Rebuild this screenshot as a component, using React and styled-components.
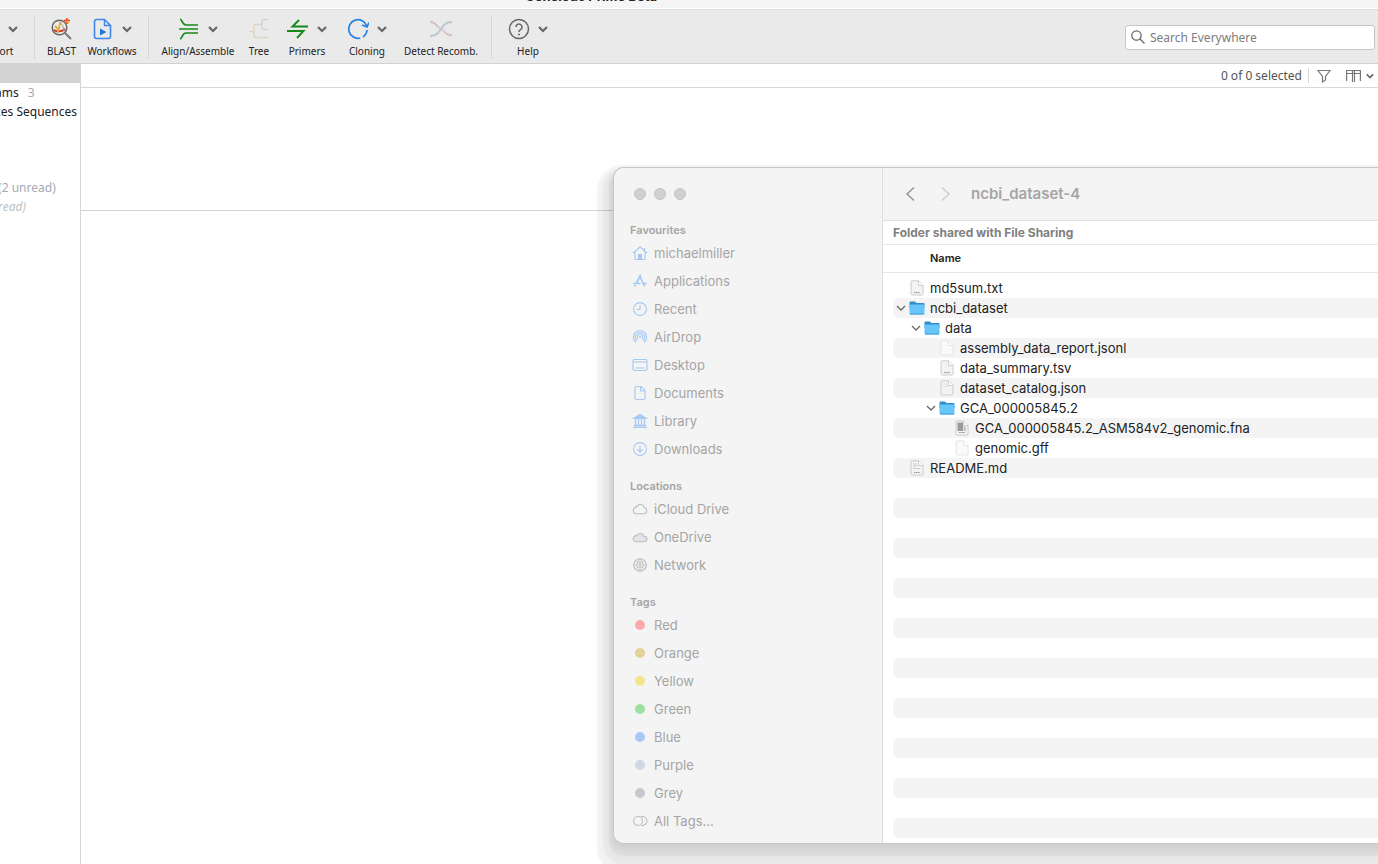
import React from 'react'
import styled, { createGlobalStyle } from 'styled-components'

const GlobalStyle = createGlobalStyle`
  * {
    box-sizing: border-box;
  }

  body {
    margin: 0;
    background: #fff;
    font-family: 'Noto Sans', sans-serif;
    font-size: 12px;
  }

  button {
    border: 0;
    padding: 0;
    background: none;
    font: inherit;
    color: inherit;
  }

  svg {
    display: block;
    flex-shrink: 0;
  }
`

const Page = styled.div`
  position: relative;
  display: flex;
  flex-direction: column;
  height: 100vh;
  overflow: hidden;
`

const TitleBar = styled.header`
  display: flex;
  align-items: flex-end;
  height: 8px;
  padding-right: 196px;
  background: #f5f5f5;

  h1 {
    flex: 1;
    margin: 0 0 4px;
    font: 700 13px/16px Inter, sans-serif;
    color: #222;
    text-align: center;
  }
`

const Toolbar = styled.div`
  display: flex;
  align-items: center;
  height: 56px;
  padding: 2px 3px 0 0;
  border-top: 1px solid #fff;
  border-bottom: 1px solid #d3d3d3;
  background: #eaeaea;
  box-shadow: inset 0 1px 0 #dedede;
`

const Tools = styled.div`
  display: flex;
  align-items: center;
  flex: 1;
  margin-left: -32px;
`

const Tool = styled.button`
  flex-shrink: 0;
  width: ${(props) => props.$width}px;
  font-size: 10px;
  line-height: 14px;
  color: #222;
  white-space: nowrap;

  .art {
    display: flex;
    align-items: center;
    justify-content: center;
    gap: 8px;
    height: 24px;
    margin-bottom: 3px;
  }
`

const Separator = styled.span`
  width: 1px;
  height: ${(props) => props.$height}px;
  margin: 0 6px;
  background: #d6d6d6;
`

const SearchBox = styled.label`
  display: flex;
  align-items: center;
  gap: 5px;
  width: 250px;
  height: 25px;
  padding: 0 5px;
  border: 1px solid #c6c6c6;
  border-radius: 3px;
  background: #fff;

  input {
    flex: 1;
    min-width: 0;
    padding: 0;
    border: 0;
    outline: 0;
    font: inherit;
  }

  input::placeholder {
    color: #7d7d7d;
    opacity: 1;
  }
`

const Workspace = styled.div`
  display: flex;
  flex: 1;
`

const Sources = styled.aside`
  width: 81px;
  border-right: 1px solid #d6d6d6;
  overflow: hidden;
`

const SourceRow = styled.div`
  height: 19px;
  padding-right: 3px;
  margin-left: -5px;
  line-height: 19px;
  white-space: pre;
  color: ${(props) => props.$color || '#222'};
  font-style: ${(props) => (props.$italic ? 'italic' : 'normal')};
  background: ${(props) => (props.$selected ? '#d3d3d3' : 'none')};

  span {
    margin-left: 9px;
    color: #a9a9a9;
  }
`

const Documents = styled.main`
  flex: 1;
`

const StatusBar = styled.div`
  display: flex;
  align-items: center;
  justify-content: flex-end;
  height: 24px;
  padding-right: 4px;
  border-bottom: 1px solid #d9d9d9;
  color: #555;

  button + button {
    display: flex;
    align-items: center;
    gap: 5px;
    margin-left: 13px;
  }
`

const DocumentList = styled.div`
  height: 123px;
  border-bottom: 1px solid #d3d3d3;
`

const Finder = styled.section`
  position: absolute;
  top: 168px;
  left: 614px;
  right: -40px;
  display: flex;
  border-radius: 10px;
  background: #fff;
  overflow: hidden;
  font-family: Inter, sans-serif;
  font-size: 13px;
  box-shadow: 0 0 0 1px #c6c6c6, 0 4px 6px 2px rgba(0, 0, 0, 0.06),
    0 8px 2px 5px rgba(0, 0, 0, 0.05), 0 11px 2px 11px rgba(0, 0, 0, 0.04),
    0 14px 2px 17px rgba(0, 0, 0, 0.05);
`

const Places = styled.nav`
  width: 269px;
  padding: 20px 16px 8px;
  border-right: 1px solid #dedede;
  background: #f4f4f4;
  color: #a5a5a5;

  h2 {
    margin: 14px 0 0;
    font-size: 11px;
    font-weight: 600;
    line-height: 18px;
  }
`

const Lights = styled.div`
  display: flex;
  gap: 8px;
  margin: 0 4px 21px;

  button {
    width: 12px;
    height: 12px;
    border: 1px solid #c3c3c3;
    border-radius: 50%;
    background: #d0d0d0;
  }
`

const Place = styled.a`
  display: flex;
  align-items: center;
  gap: 6px;
  height: 28px;
  padding-left: 2px;
  color: inherit;
  text-decoration: none;

  svg {
    color: ${(props) => (props.$grey ? '#bdbdbd' : '#a5c8f4')};
  }
`

const Dot = styled.span`
  width: 10px;
  height: 10px;
  margin: 0 3px;
  border-radius: 50%;
  background: ${(props) => props.$color};
`

const Browser = styled.div`
  flex: 1;
  min-width: 0;
`

const BrowserBar = styled.div`
  display: flex;
  align-items: center;
  gap: 17px;
  height: 53px;
  padding: 0 0 1px 18px;
  border-bottom: 1px solid #dedede;
  background: #f4f4f4;
  color: #a5a5a5;

  h2 {
    margin: 0;
    font-size: 15px;
    font-weight: 600;
  }
`

const Notice = styled.p`
  height: 24px;
  margin: 0;
  padding-left: 10px;
  border-bottom: 1px solid #e6e6e6;
  font-size: 12px;
  font-weight: 700;
  line-height: 23px;
  color: #808080;
`

const FileTable = styled.table`
  display: block;

  thead,
  tbody,
  tr,
  td,
  th {
    display: block;
    padding: 0;
  }

  th {
    height: 28px;
    padding-left: 47px;
    border-bottom: 1px solid #e6e6e6;
    font-size: 11px;
    font-weight: 600;
    line-height: 26px;
    text-align: left;
    color: #222;
  }

  tbody {
    padding: 5px 0 5px 10px;
  }
`

const FileRow = styled.tr`
  height: 20px;
  border-radius: 5px;
  color: #222;

  &:nth-child(even) {
    background: #f4f4f4;
  }

  td {
    display: flex;
    align-items: center;
    height: 20px;
    padding-left: ${(props) => props.$depth * 15 + 3}px;
  }

  svg + svg,
  .blank + svg {
    margin: 0 5px 0 3px;
  }

  .blank {
    width: 10px;
  }
`

function Chevron({ size = 10, width = 2, color = '#666' }) {
  return (
    <svg width={size} height={size} viewBox="0 0 10 10" fill="none" stroke={color} strokeWidth={width}>
      <path d="M1 3l4 4 4-4" />
    </svg>
  )
}

const toolIcons = {
  blast: (
    <>
      <circle cx="8.500" cy="9.500" r="7.300" stroke="#666" strokeWidth="1.500" />
      <path d="M14 15l6 6" stroke="#777" strokeWidth="1.800" />
      <path d="M3 12c3 2 8 2 11-1" stroke="#d42a1e" strokeWidth="1.800" />
      <path d="M6 15c3-2 1-7 4-11M4 8l4 4" stroke="#e9ad35" strokeWidth="1.800" />
      <path d="M8 4c3 2 5 5 5 9" stroke="#a79b90" strokeWidth="1" />
      <path d="M16 0v6M13 2.500h6" stroke="#e83c20" strokeWidth="1.500" />
      <path d="M16 3l2 2" stroke="#f1b52c" strokeWidth="1.800" />
    </>
  ),
  workflow: (
    <>
      <path d="M4.500 1.500h8l6 6v11a2 2 0 0 1-2 2h-12a2 2 0 0 1-2-2v-15a2 2 0 0 1 2-2z" stroke="#3d87e8" strokeWidth="1.600" />
      <path d="M12.500 1.500v6h6" stroke="#3d87e8" strokeWidth="1.400" />
      <path d="M8 10.500l6.500 3.500L8 17.500z" fill="#1f78d8" />
    </>
  ),
  align: (
    <g stroke="#168a16" strokeWidth="1.700">
      <path d="M2 1c2 0 2 6 6 6h12M1 11h19M2 21c2 0 2-6 6-6h12" />
    </g>
  ),
  tree: (
    <g strokeWidth="1.600">
      <path d="M20 1.500h-4a2 2 0 0 0-2 2v6a2 2 0 0 0 2 2h4M14 6.500h-6" stroke="#d6d4d0" />
      <path d="M8 6.500a2 2 0 0 0-2 2v9a2 2 0 0 0 2 2h12M1 13.500h5" stroke="#dfd5c2" />
    </g>
  ),
  primers: (
    <path d="M21 8.500H5.500L12 2M0 13h16.500L10 20" stroke="#168a16" strokeWidth="1.900" />
  ),
  cloning: (
    <>
      <path d="M19.800 8a9.300 9.300 0 1 0-6.500 12M16 19a9.300 9.300 0 0 0 4-7" stroke="#2380e5" strokeWidth="1.700" />
      <path d="M15 7l5 2 2-4.500" stroke="#2380e5" strokeWidth="1.700" />
    </>
  ),
  recomb: (
    <g strokeWidth="1.900">
      <path d="M0 4c4 0 6 2 8 5M14 13c3 4 5 4 8 4" stroke="#d8c0bf" />
      <path d="M7 8l8 6" stroke="#d1ced6" />
      <path d="M0 18c13 0 9-14 22-14" stroke="#bdc4d1" />
    </g>
  ),
  help: (
    <>
      <circle cx="11" cy="11" r="9.500" stroke="#666" strokeWidth="1.500" />
      <path d="M8 9a3 3 0 1 1 4.800 2.400C11.500 12.300 11 12.500 11 14" stroke="#666" strokeWidth="1.500" />
      <circle cx="11" cy="16.500" r="1" fill="#666" />
    </>
  ),
}

const tools = [
  { label: 'Export', width: 60, menu: true },
  { separator: true },
  { label: 'BLAST', width: 41, icon: 'blast' },
  { label: 'Workflows', width: 60, icon: 'workflow', menu: true },
  { separator: true },
  { label: 'Align/Assemble', width: 86, icon: 'align', menu: true },
  { label: 'Tree', width: 36, icon: 'tree' },
  { label: 'Primers', width: 60, icon: 'primers', menu: true },
  { label: 'Cloning', width: 60, icon: 'cloning', menu: true },
  { label: 'Detect Recomb.', width: 88, icon: 'recomb' },
  { separator: true },
  { label: 'Help', width: 60, icon: 'help', menu: true },
]

const placeIcons = {
  home: (
    <>
      <path d="M1 8l7-6 7 6M3 7v7.500h10V7M12.500 5.500V3" />
      <path d="M6.500 9.500h3v5h-3z" fill="currentColor" />
    </>
  ),
  apps: <path d="M8.800 2L4.200 10.500M7.200 2l5.600 11.500M1.200 10.500h7.300M11.500 10.500h3.300M3.500 12l-.8 1.500" strokeWidth="1.700" />,
  clock: (
    <>
      <circle cx="8" cy="8" r="6.400" />
      <path d="M8 4v4.500H4.500" />
    </>
  ),
  airdrop: (
    <>
      <path d="M4 13.500a6.700 6.700 0 1 1 8 0M5 11.700a4.700 4.700 0 1 1 6 0M6.200 10a2.700 2.700 0 1 1 3.600 0" />
      <circle cx="8" cy="8" r="1" fill="currentColor" stroke="none" />
    </>
  ),
  desktop: (
    <>
      <rect x="1" y="2.500" width="14" height="11" rx="1.500" />
      <path d="M1 5h14M3.500 11h9" />
    </>
  ),
  document: <path d="M3 3a1.500 1.500 0 0 1 1.500-1.500H9l4 4V13a1.500 1.500 0 0 1-1.500 1.500h-7A1.500 1.500 0 0 1 3 13zM8.500 1.500V6H13" />,
  library: (
    <>
      <path d="M1.500 5.500L8 1.500l6.500 4z" fill="currentColor" />
      <path d="M3.500 6v7M6.500 6v7M9.500 6v7M12.500 6v7M2 12.500h12M1 14.300h14" strokeWidth="1.300" />
    </>
  ),
  download: (
    <>
      <circle cx="8" cy="8" r="6.400" />
      <path d="M8 4.500v6.500M5.500 8.500L8 11l2.500-2.500" />
    </>
  ),
  cloud: <path d="M4 12.800a3.200 3.200 0 0 1-.5-6.200 1.800 1.800 0 0 1 2-1.500 3.700 3.700 0 0 1 6.800 1.500 3.200 3.200 0 0 1 .2 6.200z" />,
  onedrive: <path d="M3.500 12.800a3 3 0 0 1-.3-5.800 2 2 0 0 1 2.300-1 3.700 3.700 0 0 1 6.500 1.300 2.800 2.800 0 0 1 .8 5.500z" fill="#e4e4e4" />,
  network: (
    <>
      <circle cx="8" cy="8" r="6.300" />
      <path d="M8 2v12M2 8h12M3.500 4.500c2.500 2 6.500 2 9 0M3.500 11.500c2.500-2 6.500-2 9 0M8 2c-4 3.500-4 8.500 0 12M8 2c4 3.500 4 8.500 0 12" strokeWidth=".8" />
    </>
  ),
  tags: (
    <>
      <rect x="1.500" y="3.500" width="9" height="9" rx="4.500" />
      <path d="M10.500 3.500a4.500 4.500 0 0 1 0 9M9 3.500h1.500M9 12.500h1.500" />
    </>
  ),
}

const places = [
  {
    title: 'Favourites',
    items: [
      { label: 'michaelmiller', icon: 'home' },
      { label: 'Applications', icon: 'apps' },
      { label: 'Recent', icon: 'clock' },
      { label: 'AirDrop', icon: 'airdrop' },
      { label: 'Desktop', icon: 'desktop' },
      { label: 'Documents', icon: 'document' },
      { label: 'Library', icon: 'library' },
      { label: 'Downloads', icon: 'download' },
    ],
  },
  {
    title: 'Locations',
    grey: true,
    items: [
      { label: 'iCloud Drive', icon: 'cloud' },
      { label: 'OneDrive', icon: 'onedrive' },
      { label: 'Network', icon: 'network' },
    ],
  },
  {
    title: 'Tags',
    grey: true,
    items: [
      { label: 'Red', color: '#fba9af' },
      { label: 'Orange', color: '#e5d09a' },
      { label: 'Yellow', color: '#f1e68e' },
      { label: 'Green', color: '#9ee0a2' },
      { label: 'Blue', color: '#a8c8f5' },
      { label: 'Purple', color: '#d0d7e6' },
      { label: 'Grey', color: '#c8c8c8' },
      { label: 'All Tags...', icon: 'tags' },
    ],
  },
]

const files = [
  { name: 'md5sum.txt', depth: 0, mark: 'text' },
  { name: 'ncbi_dataset', depth: 0, folder: true },
  { name: 'data', depth: 1, folder: true },
  { name: 'assembly_data_report.jsonl', depth: 2, mark: 'plain' },
  { name: 'data_summary.tsv', depth: 2, mark: 'text' },
  { name: 'dataset_catalog.json', depth: 2, mark: 'json' },
  { name: 'GCA_000005845.2', depth: 2, folder: true },
  { name: 'GCA_000005845.2_ASM584v2_genomic.fna', depth: 3, mark: 'dark' },
  { name: 'genomic.gff', depth: 3, mark: 'plain' },
  { name: 'README.md', depth: 0, mark: 'markdown' },
]

const blankRows = Array.from({ length: 18 })

function FolderIcon() {
  return (
    <svg width="16" height="16" viewBox="0 0 16 16">
      <path d="M.5 2.500a1 1 0 0 1 1-1H6L7.500 3h7a1 1 0 0 1 1 1v4H.5z" fill="#2f8fcd" />
      <rect x=".5" y="4.500" width="15" height="10" rx="1" fill="#68c5fa" />
      <path d="M1 14h14" stroke="#409fd8" />
    </svg>
  )
}

function FileIcon({ mark }) {
  let edge = mark === 'plain' ? '#e0e0e0' : '#c2c2c2'

  return (
    <svg width="16" height="16" viewBox="0 0 16 16" fill="none">
      <path
        d="M3 .8h6.500l4.500 4.700V14a1 1 0 0 1-1 1H3a1 1 0 0 1-1-1V1.800a1 1 0 0 1 1-1z"
        fill={mark === 'plain' ? '#fafafa' : '#f3f3f3'}
        stroke={edge}
        strokeWidth=".8"
      />
      <path d="M9.500 1v4.500H14" fill="#fff" stroke={edge} strokeWidth=".8" />
      {mark === 'dark' && <path d="M3.500 2.500H9v8.500H3.500z" fill="#9a9a9a" />}
      {mark === 'dark' && <path d="M9.500 6.500H12V11H9.500z" fill="#c4c4c4" />}
      {mark === 'markdown' && <path d="M4 4h4M4 6h4M4 8.500h7" stroke="#ccc" />}
      {mark === 'json' && <path d="M4 4h4M4 6.500h5" stroke="#e0e0e0" />}
      {(mark === 'text' || mark === 'markdown' || mark === 'dark') && (
        <path d="M5 12.500h6" stroke="#999" strokeWidth="1.200" strokeDasharray="1.600 .4" />
      )}
    </svg>
  )
}

function MainToolbar() {
  return (
    <Toolbar>
      <Tools>
        {tools.map((tool, idx) => {
          if (tool.separator) {
            return <Separator key={idx} $height={44} />
          }
          return (
            <Tool key={tool.label} $width={tool.width}>
              <span className="art">
                <svg width="22" height="22" viewBox="0 0 22 22" fill="none">
                  {toolIcons[tool.icon]}
                </svg>
                {tool.menu && <Chevron width={2.2} />}
              </span>
              {tool.label}
            </Tool>
          )
        })}
      </Tools>
      <SearchBox>
        <svg width="14" height="14" viewBox="0 0 14 14" fill="none" stroke="#666" strokeWidth="1.200">
          <circle cx="5.500" cy="5.500" r="4.700" />
          <path d="M9 9l4.500 4.500" />
        </svg>
        <input type="search" placeholder="Search Everywhere" aria-label="Search Everywhere" />
      </SearchBox>
    </Toolbar>
  )
}

function FinderWindow() {
  return (
    <Finder>
      <Places>
        <Lights>
          <button aria-label="Close" />
          <button aria-label="Minimise" />
          <button aria-label="Zoom" />
        </Lights>
        {places.map((group) => (
          <React.Fragment key={group.title}>
            <h2>{group.title}</h2>
            {group.items.map((item) => (
              <Place key={item.label} href="#" $grey={group.grey}>
                {item.color ? (
                  <Dot $color={item.color} />
                ) : (
                  <svg width="16" height="16" viewBox="0 0 16 16" fill="none" stroke="currentColor" strokeWidth="1.100">
                    {placeIcons[item.icon]}
                  </svg>
                )}
                {item.label}
              </Place>
            ))}
          </React.Fragment>
        ))}
      </Places>
      <Browser>
        <BrowserBar>
          <button aria-label="Back">
            <svg width="18" height="18" viewBox="0 0 18 18" fill="none" stroke="#999" strokeWidth="1.600">
              <path d="M13 2.500L6 9l7 6.500" />
            </svg>
          </button>
          <button aria-label="Forward">
            <svg width="18" height="18" viewBox="0 0 18 18" fill="none" stroke="#cfcfcf" strokeWidth="1.600">
              <path d="M6 2.500L13 9l-7 6.500" />
            </svg>
          </button>
          <h2>ncbi_dataset-4</h2>
        </BrowserBar>
        <Notice>Folder shared with File Sharing</Notice>
        <FileTable>
          <thead>
            <tr>
              <th>Name</th>
            </tr>
          </thead>
          <tbody>
            {files.map((file) => (
              <FileRow key={file.name} $depth={file.depth}>
                <td>
                  {file.folder ? <Chevron width={1.3} /> : <span className="blank" />}
                  {file.folder ? <FolderIcon /> : <FileIcon mark={file.mark} />}
                  {file.name}
                </td>
              </FileRow>
            ))}
            {blankRows.map((_, idx) => (
              <FileRow key={idx} $depth={0}>
                <td />
              </FileRow>
            ))}
          </tbody>
        </FileTable>
      </Browser>
    </Finder>
  )
}

function App() {
  return (
    <Page>
      <GlobalStyle />
      <TitleBar>
        <h1>Geneious Prime Beta</h1>
      </TitleBar>
      <MainToolbar />
      <Workspace>
        <Sources>
          <SourceRow $selected />
          <SourceRow>
            ams<span>3</span>
          </SourceRow>
          <SourceRow>ces Sequences</SourceRow>
          <SourceRow />
          <SourceRow />
          <SourceRow />
          <SourceRow $color="#a4a9b5">{' (2 unread)'}</SourceRow>
          <SourceRow $color="#bfbfbf" $italic>
            {' read)'}
          </SourceRow>
        </Sources>
        <Documents>
          <StatusBar>
            0 of 0 selected
            <Separator $height={15} />
            <button aria-label="Filter">
              <svg width="18" height="14" viewBox="0 0 18 14" fill="none" stroke="#777" strokeWidth="1.200">
                <path d="M3 1.500h12l-4.500 6V11l-3 2V7.500z" />
              </svg>
            </button>
            <button aria-label="Columns">
              <svg width="15" height="14" viewBox="0 0 15 14" fill="none" stroke="#777" strokeWidth="1.200">
                <path d="M.6 12V1.500h13.800V12M.6 4.500h13.800M6.500 1.500V13M8.500 1.500V13" />
              </svg>
              <Chevron size={8} />
            </button>
          </StatusBar>
          <DocumentList />
        </Documents>
      </Workspace>
      <FinderWindow />
    </Page>
  )
}

export default App
